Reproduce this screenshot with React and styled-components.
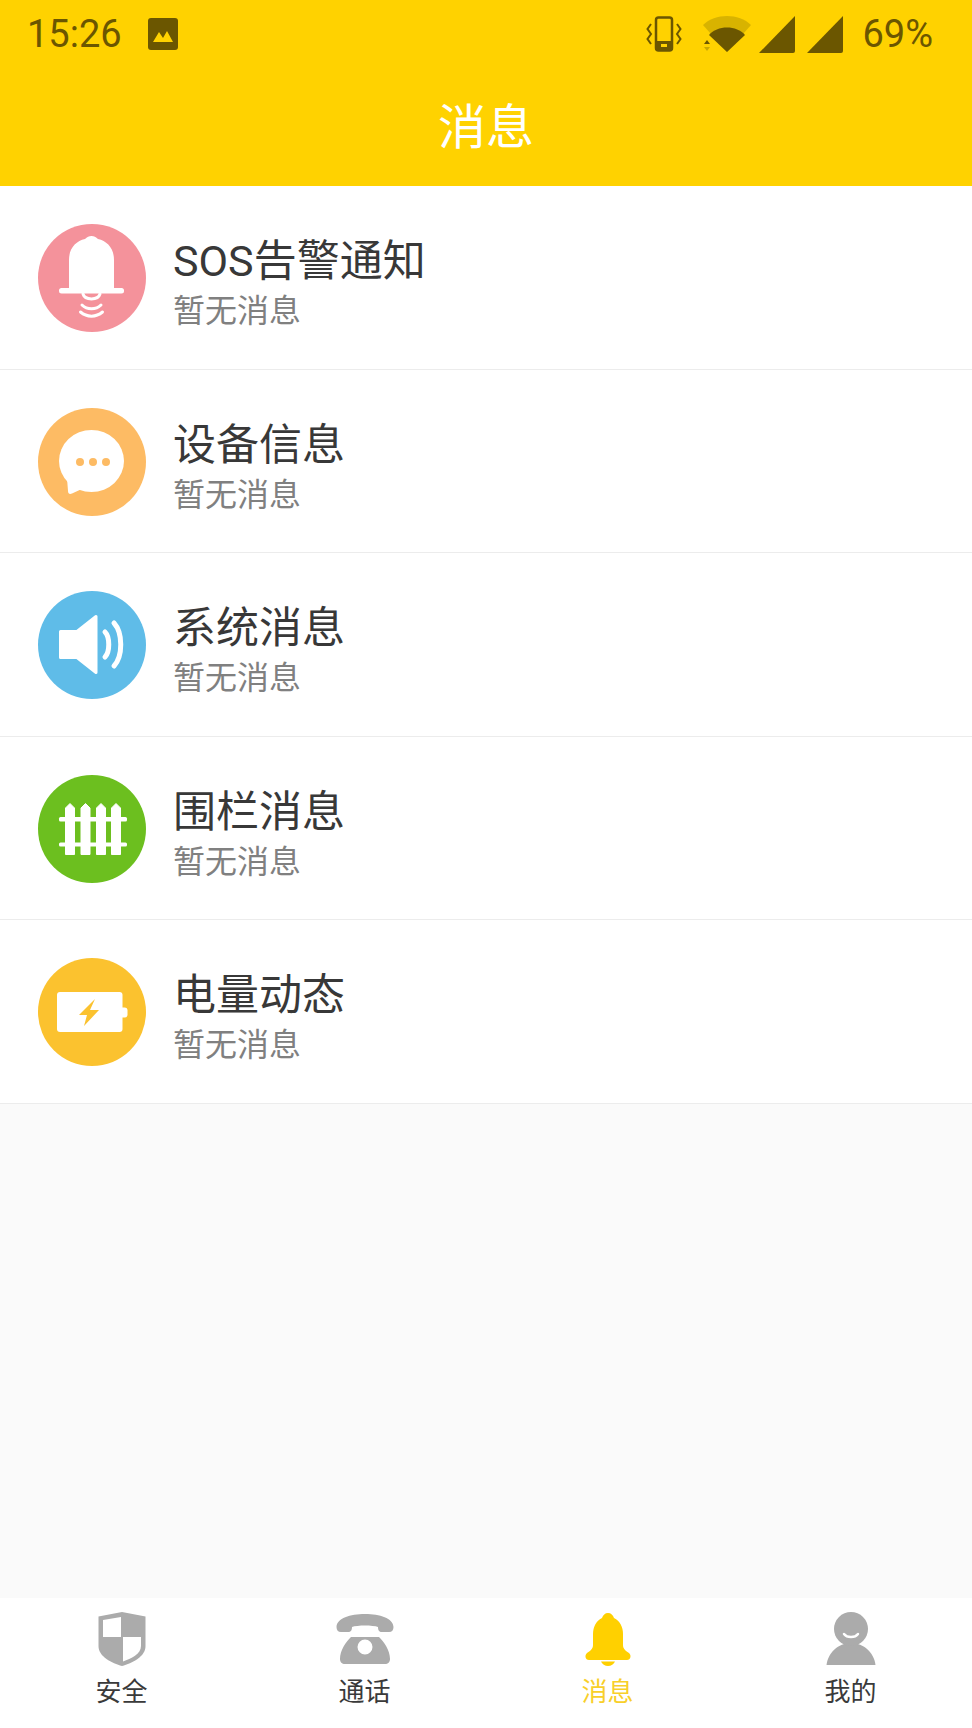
import React from 'react'
import styled, { createGlobalStyle } from 'styled-components'

function BellBadge() {
    return (
        <BadgeSvg viewBox="0 0 108 108">
            <path fill="#fff" d="M31 64V36C31 24 38 17 47 15C49 13 51 12 53.500 12C56 12 58 13 60 15C69 17 76 24 76 36V64Z" />
            <rect x="21" y="64" width="65" height="5.500" rx="2.500" fill="#fff" />
            <g fill="none" stroke="#fff" strokeWidth="3" strokeLinecap="round">
                <path d="M45 70C47 76.500 60 76.500 62 70" />
                <path d="M44 81C49 86 58 86 63 81" />
                <path d="M42.500 88C49 93.500 58 93.500 64.500 88" />
            </g>
        </BadgeSvg>
    )
}

function ChatBadge() {
    return (
        <BadgeSvg viewBox="0 0 108 108">
            <ellipse cx="53.500" cy="53" rx="32.500" ry="31" fill="#fff" />
            <path fill="#fff" d="M29 70L30 83C30 86 32 86.500 34 85.500L46 80Z" />
            <circle cx="42" cy="54" r="4" fill="#fdbb64" />
            <circle cx="55" cy="54" r="4" fill="#fdbb64" />
            <circle cx="68" cy="54" r="4" fill="#fdbb64" />
        </BadgeSvg>
    )
}

function SpeakerBadge() {
    return (
        <BadgeSvg viewBox="0 0 108 108">
            <path fill="#fff" stroke="#fff" strokeWidth="3" strokeLinejoin="round" d="M22.500 40.500H39L58 25.500V81.500L39 66.500H22.500Z" />
            <g fill="none" stroke="#fff" strokeWidth="5" strokeLinecap="round">
                <path d="M67 41C72 46 72 61 67 66" />
                <path d="M76 32C85 42 85 65 76 75" />
            </g>
        </BadgeSvg>
    )
}

function FenceBadge() {
    const pickets = [27, 42.500, 58, 73]
    return (
        <BadgeSvg viewBox="0 0 108 108">
            {pickets.map((x) => (
                <path key={x} fill="#fff" stroke="#fff" strokeWidth="1" strokeLinejoin="round" d={`M${x + 0.5} 79.500V33L${x + 5} 28.500L${x + 9.500} 33V79.500Z`} />
            ))}
            <rect x="21" y="42" width="68" height="4.500" rx="1.500" fill="#fff" />
            <rect x="21" y="67.500" width="68" height="4" rx="1.500" fill="#fff" />
        </BadgeSvg>
    )
}

function BatteryBadge() {
    return (
        <BadgeSvg viewBox="0 0 108 108">
            <rect x="19" y="34" width="65.500" height="40" rx="3" fill="#fff" />
            <rect x="80" y="49.500" width="9.500" height="10" rx="3" fill="#fff" />
            <path fill="#fbc22f" d="M57 41L41 57H49L46 68L61 52H52Z" />
        </BadgeSvg>
    )
}

function ShieldIcon({ color }) {
    return (
        <NavSvg viewBox="0 0 60 54">
            <path fill={color} d="M30 0L53.500 4.500V34C53.500 45 40 51 30 54C20 51 6.500 45 6.500 34V4.500Z" />
            <path fill="#fff" d="M11 8L29 5V25H11Z" />
            <path fill="#fff" d="M31 25H49V34C49 42 39 46.500 31 49.500Z" />
        </NavSvg>
    )
}

function PhoneIcon({ color }) {
    return (
        <NavSvg viewBox="0 0 60 54">
            <path fill={color} d="M1.500 15C2 6 15 2 30 2C45 2 58 6 58.500 15C58.500 18 57 20 54 20H47C44 20 43 18 43 15C38 13 22 13 17 15C17 18 16 20 13 20H6C3 20 1.500 18 1.500 15Z" />
            <path fill={color} fillRule="evenodd" d="M16 25H44C49 30 55 38 55 47C55 50 53 52 50 52H10C7 52 5 50 5 47C5 38 11 30 16 25ZM30 27.500A7.500 7.500 0 1 0 30 42.500A7.500 7.500 0 1 0 30 27.500Z" />
        </NavSvg>
    )
}

function BellIcon({ color }) {
    return (
        <NavSvg viewBox="0 0 60 54">
            <path fill={color} d="M30 1C33 1 35 3 36 6C42 9 45 15 45 22V33C45 37 48 39 51 41C53.500 43 53 48 49 48H11C7 48 6.500 43 9 41C12 39 15 37 15 33V22C15 15 18 9 24 6C25 3 27 1 30 1Z" />
            <path fill={color} d="M23 49.500H37C36 52 33 54 30 54C27 54 24 52 23 49.500Z" />
        </NavSvg>
    )
}

function PersonIcon({ color }) {
    return (
        <NavSvg viewBox="0 0 60 54">
            <path fill={color} d="M5.500 53C7 41 17 31 30 31C43 31 53 41 54.500 53Z" />
            <circle cx="30" cy="17" r="17" fill={color} />
            <path fill="none" stroke="#fff" strokeWidth="2.500" strokeLinecap="round" d="M23 22C26 26 34 26 37 22" />
        </NavSvg>
    )
}

const rows = [
    { title: 'SOS告警通知', color: '#f4929b', Badge: BellBadge },
    { title: '设备信息', color: '#fdbb64', Badge: ChatBadge },
    { title: '系统消息', color: '#5fbce8', Badge: SpeakerBadge },
    { title: '围栏消息', color: '#6cbf1f', Badge: FenceBadge },
    { title: '电量动态', color: '#fbc22f', Badge: BatteryBadge },
]

const tabs = [
    { label: '安全', Icon: ShieldIcon },
    { label: '通话', Icon: PhoneIcon },
    { label: '消息', Icon: BellIcon, active: true },
    { label: '我的', Icon: PersonIcon },
]

function App() {
    return (
        <>
            <GlobalStyle />
            <Page>
                <Header>
                    <StatusBar>
                        <StatusLeft>
                            <StatusText>15:26</StatusText>
                            <svg width="30" height="32" viewBox="0 0 30 32">
                                <rect x="0" y="0" width="30" height="32" rx="3" fill="#6b5600" />
                                <path fill="#ffd200" d="M5 24L11 14L15 20L19 13L25 24Z" />
                            </svg>
                        </StatusLeft>
                        <StatusRight>
                            <svg width="36" height="36" viewBox="0 0 36 36">
                                <rect x="10" y="1.500" width="16" height="33" rx="2.500" fill="none" stroke="#6b5600" strokeWidth="2.500" />
                                <rect x="10" y="25" width="16" height="9" fill="#6b5600" />
                                <rect x="15" y="28" width="6" height="3" fill="#ffd200" />
                                <g fill="none" stroke="#6b5600" strokeWidth="2">
                                    <path d="M5 8L1.500 13L5 18L1.500 23L5 28" />
                                    <path d="M31 8L34.500 13L31 18L34.500 23L31 28" />
                                </g>
                            </svg>
                            <WifiSvg width="48" height="36" viewBox="0 0 48 36">
                                <path fill="#d8b300" d="M0 9C12 -3 36 -3 48 9L24 36Z" />
                                <path fill="#6b5600" d="M6 19C14 9 34 9 42 19L24 36Z" />
                                <path fill="#6b5600" d="M1 28L4 24L7 28Z" />
                                <path fill="#c9a800" d="M1 31H7L4 35Z" />
                            </WifiSvg>
                            <SignalSvg width="36" height="37" viewBox="0 0 36 37">
                                <path fill="#6b5600" d="M36 0V35Q36 37 34 37H0Z" />
                            </SignalSvg>
                            <SignalSvg $narrow width="36" height="37" viewBox="0 0 36 37">
                                <path fill="#6b5600" d="M36 0V35Q36 37 34 37H0Z" />
                            </SignalSvg>
                            <BatteryText>69%</BatteryText>
                        </StatusRight>
                    </StatusBar>
                    <HeaderTitle>消息</HeaderTitle>
                </Header>
                <List>
                    {rows.map(({ title, color, Badge }) => (
                        <Row key={title}>
                            <Circle $color={color}>
                                <Badge />
                            </Circle>
                            <RowText>
                                <RowTitle>{title}</RowTitle>
                                <RowSub>暂无消息</RowSub>
                            </RowText>
                        </Row>
                    ))}
                </List>
                <Spacer />
                <TabBar>
                    {tabs.map(({ label, Icon, active }) => (
                        <Tab key={label}>
                            <Icon color={active ? '#ffd000' : '#ababab'} />
                            <TabLabel $active={active}>{label}</TabLabel>
                        </Tab>
                    ))}
                </TabBar>
            </Page>
        </>
    )
}

export default App

const GlobalStyle = createGlobalStyle`
    html, body {
        margin: 0;
        padding: 0;
        background: #fafafa;
    }
`

const Page = styled.div`
    width: 972px;
    height: 1728px;
    display: flex;
    flex-direction: column;
    overflow: hidden;
    background: #fafafa;
    font-family: Roboto, "Noto Sans CJK SC", sans-serif;
`

const Header = styled.header`
    height: 186px;
    background: #ffd200;
    display: flex;
    flex-direction: column;
`

const StatusBar = styled.div`
    height: 66px;
    padding: 16px 39px 0 27px;
    box-sizing: border-box;
    display: flex;
    justify-content: space-between;
    align-items: flex-start;
`

const StatusLeft = styled.div`
    display: flex;
    align-items: center;
    gap: 26px;
`

const StatusRight = styled.div`
    display: flex;
    align-items: flex-start;
`

const StatusText = styled.span`
    font-size: 38px;
    line-height: 36px;
    color: #6b5600;
`

const BatteryText = styled(StatusText)`
    margin-left: 19px;
`

const WifiSvg = styled.svg`
    margin-left: 21px;
`

const SignalSvg = styled.svg`
    margin-left: ${(props) => (props.$narrow ? '12px' : '8px')};
`

const HeaderTitle = styled.h1`
    margin: 0;
    height: 120px;
    line-height: 124px;
    text-align: center;
    font-size: 48px;
    font-weight: 400;
    color: #fff;
`

const List = styled.ul`
    margin: 0;
    padding: 0;
    list-style: none;
    background: #fff;
`

const Row = styled.li`
    height: 183.500px;
    box-sizing: border-box;
    padding: 2px 0 0 38px;
    display: flex;
    align-items: center;
    gap: 27px;
    border-bottom: 1.500px solid #ececec;
`

const Circle = styled.div`
    width: 108px;
    height: 108px;
    border-radius: 50%;
    flex-shrink: 0;
    background: ${(props) => props.$color};
`

const BadgeSvg = styled.svg`
    display: block;
    width: 108px;
    height: 108px;
`

const RowText = styled.div`
    padding-top: 13px;
    display: flex;
    flex-direction: column;
`

const RowTitle = styled.div`
    font-size: 43px;
    line-height: 53px;
    color: #383838;
`

const RowSub = styled.div`
    font-size: 32px;
    line-height: 46px;
    color: #808080;
`

const Spacer = styled.div`
    flex: 1;
`

const TabBar = styled.nav`
    height: 130px;
    background: #fff;
    display: grid;
    grid-template-columns: repeat(4, 1fr);
`

const Tab = styled.div`
    padding-top: 14px;
    display: flex;
    flex-direction: column;
    align-items: center;
`

const NavSvg = styled.svg`
    display: block;
    width: 60px;
    height: 54px;
`

const TabLabel = styled.span`
    margin-top: 8px;
    font-size: 26px;
    line-height: 36px;
    color: ${(props) => (props.$active ? '#f8cf2a' : '#3a3a3a')};
`
